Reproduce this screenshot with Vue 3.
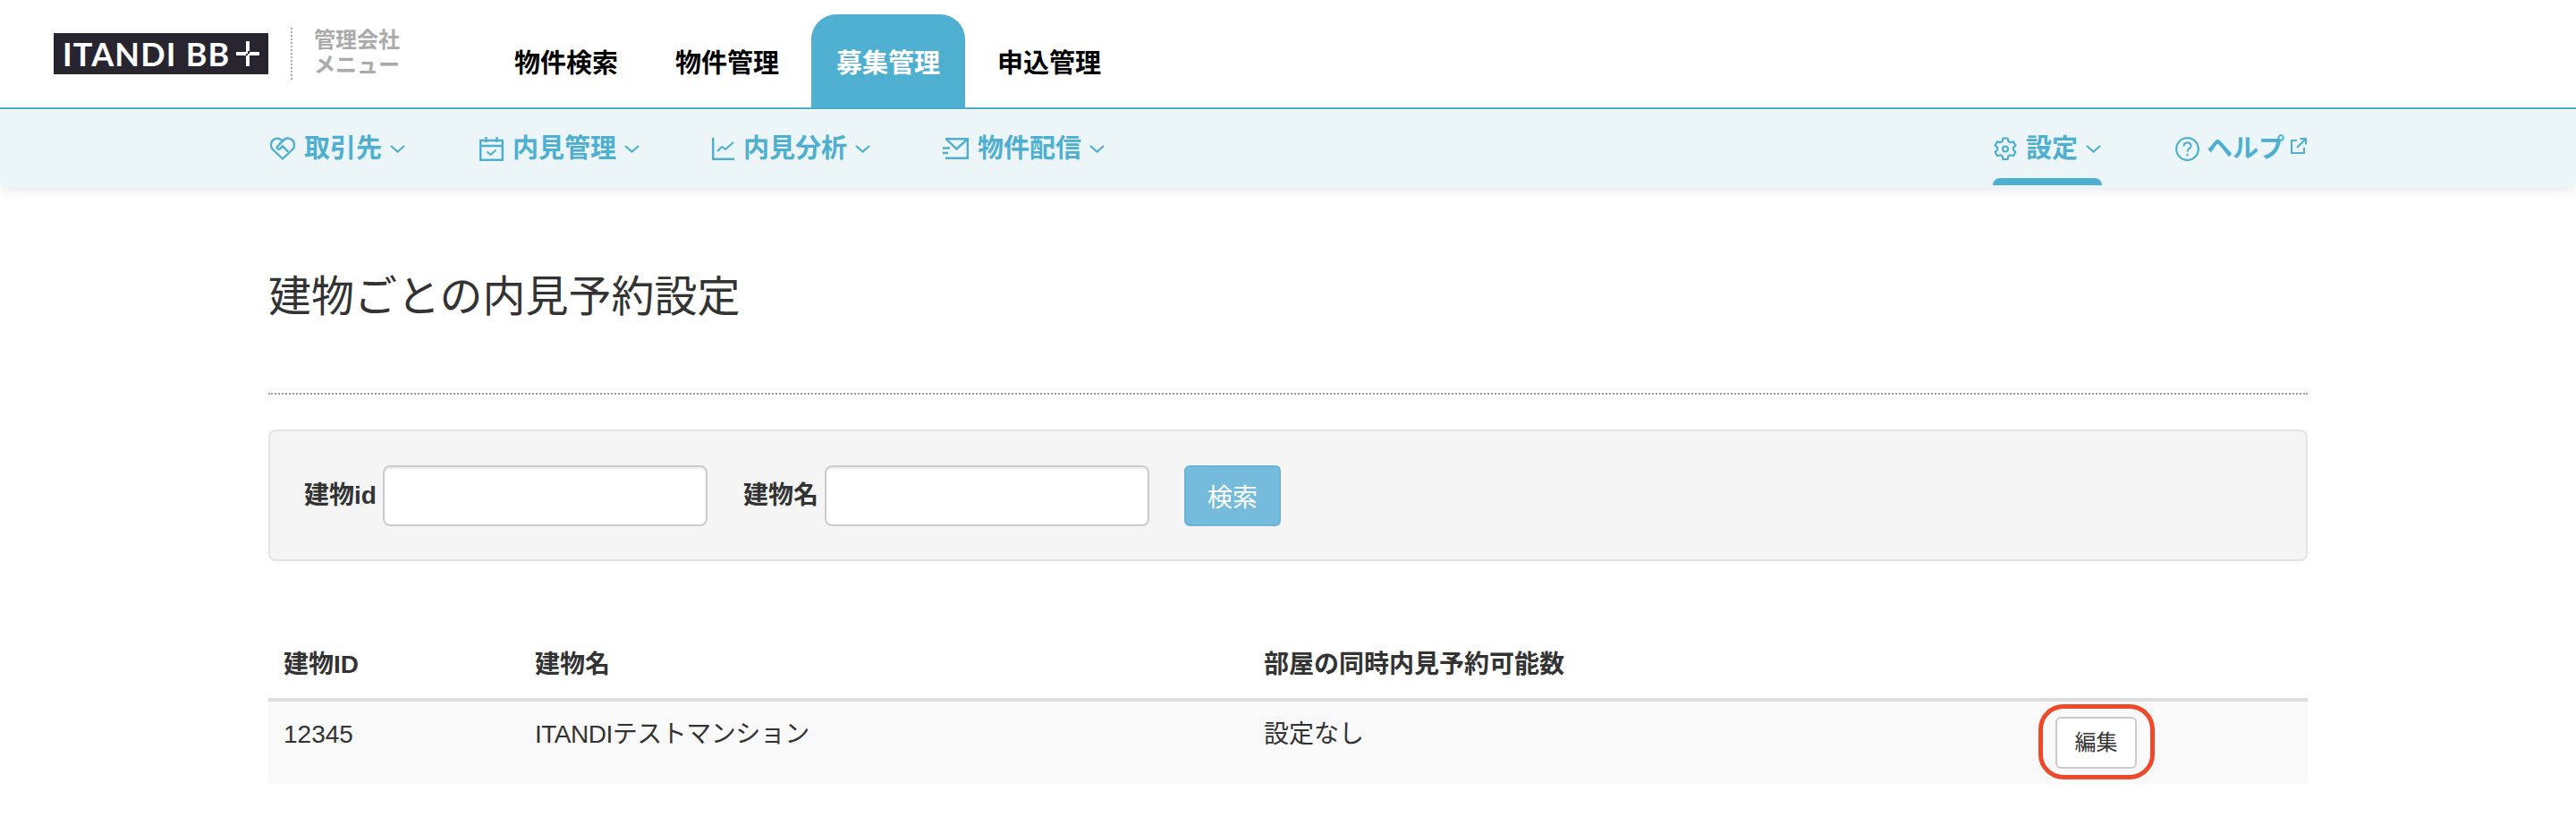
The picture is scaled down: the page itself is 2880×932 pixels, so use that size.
<script setup>
const topTabs = [
  { label: '物件検索', active: false },
  { label: '物件管理', active: false },
  { label: '募集管理', active: true },
  { label: '申込管理', active: false }
]
</script>

<template>
  <div class="page">
    <header class="top">
      <div class="logo">
        <span class="logo-text">ITANDI BB</span>
        <svg class="logo-plus" width="26" height="28" viewBox="0 0 26 28" fill="#fff">
          <rect x="0" y="12" width="11" height="4" />
          <rect x="15" y="12" width="11" height="4" />
          <rect x="11" y="0" width="4" height="11" />
          <rect x="11" y="16" width="4" height="12" />
          <rect x="11" y="11" width="2" height="3" />
          <rect x="13" y="14" width="2" height="2" />
        </svg>
      </div>
      <div class="menu-label">管理会社<br />メニュー</div>
      <nav class="tabs">
        <a v-for="t in topTabs" :key="t.label" class="tab" :class="{ active: t.active }">{{ t.label }}</a>
      </nav>
    </header>

    <div class="subnav">
      <div class="group left">
        <a class="item first">
          <svg width="28" height="26" viewBox="0 0 28 26" fill="none" stroke="#4fafd0" stroke-width="2.400" stroke-linejoin="round" stroke-linecap="round">
            <path d="M14 24.500 2.500 13.500C-.5 9.500 1 3 6.500 1.800 9.500 1.200 12 2.200 14 4.700 16 2.200 19 1.200 21.500 1.800 27 3 28.500 9.500 25.500 13.500Z" />
            <path d="M14 4.700 8 10.800C7 13.300 9.500 14.300 11 13.300L14 10.300 19.500 15.800" />
          </svg>
          <span class="txt">取引先</span>
          <svg class="chev" width="17" height="9" viewBox="0 0 17 9" fill="none" stroke="#4fafd0" stroke-width="2.200"><path d="M1 1l7.500 6.500L16 1" /></svg>
        </a>
        <a class="item">
          <svg width="27" height="27" viewBox="0 0 27 27" fill="none" stroke="#4fafd0" stroke-width="2.400">
            <path d="M1.200 4h24.600v21.800H1.200zM1.200 10h24.600M7.500 0v6M19.500 0v6" />
            <path d="M8.500 16.500l4 3.500 6-5.500" stroke-width="2" />
          </svg>
          <span class="txt">内見管理</span>
          <svg class="chev" width="17" height="9" viewBox="0 0 17 9" fill="none" stroke="#4fafd0" stroke-width="2.200"><path d="M1 1l7.500 6.500L16 1" /></svg>
        </a>
        <a class="item">
          <svg width="25" height="25" viewBox="0 0 25 25" fill="none" stroke="#4fafd0" stroke-width="2.400">
            <path d="M1.200 0v23.800H25" />
            <path d="M6 15l5-5 4 3 9-8" stroke-width="2" />
          </svg>
          <span class="txt">内見分析</span>
          <svg class="chev" width="17" height="9" viewBox="0 0 17 9" fill="none" stroke="#4fafd0" stroke-width="2.200"><path d="M1 1l7.500 6.500L16 1" /></svg>
        </a>
        <a class="item">
          <svg width="29" height="24" viewBox="0 0 29 24" fill="none" stroke="#4fafd0" stroke-width="2.400">
            <path d="M3 1.200h24.800v21.600H3M4 1.500l11.500 11 12-11" />
            <path d="M0 11.500h8M0 17h6" />
          </svg>
          <span class="txt">物件配信</span>
          <svg class="chev" width="17" height="9" viewBox="0 0 17 9" fill="none" stroke="#4fafd0" stroke-width="2.200"><path d="M1 1l7.500 6.500L16 1" /></svg>
        </a>
      </div>
      <div class="group right">
        <a class="item current">
          <svg width="26" height="27" viewBox="0 0 26 27" fill="none" stroke="#4fafd0" stroke-width="2.200" stroke-linejoin="round">
            <path d="M10.500 1.500h5l.8 3.400 2.300 1.300 3.300-1 2.500 4.300-2.500 2.400v2.600l2.500 2.400-2.500 4.300-3.300-1-2.300 1.300-.8 3.500h-5l-.8-3.500-2.300-1.300-3.300 1-2.500-4.300 2.500-2.400v-2.600L1.600 9.500l2.500-4.300 3.300 1 2.300-1.300z" />
            <circle cx="13" cy="13.500" r="3" />
          </svg>
          <span class="txt">設定</span>
          <svg class="chev" width="17" height="9" viewBox="0 0 17 9" fill="none" stroke="#4fafd0" stroke-width="2.200"><path d="M1 1l7.500 6.500L16 1" /></svg>
        </a>
        <a class="item help">
          <svg width="27" height="27" viewBox="0 0 27 27" fill="none" stroke="#4fafd0" stroke-width="2.200">
            <circle cx="13.500" cy="13.500" r="12.300" />
            <path d="M9.500 10.500c0-5.500 8-5.500 8-.5 0 3-4 3-4 6.500" />
            <circle cx="13.500" cy="20" r="1.300" fill="#4fafd0" stroke="none" />
          </svg>
          <span class="txt">ヘルプ</span>
          <svg class="ext" width="18" height="18" viewBox="0 0 18 18" fill="none" stroke="#4fafd0" stroke-width="2">
            <path d="M7 3H1v14h14v-6M7 11 17 1M10.500 1H17v6.500" />
          </svg>
        </a>
      </div>
    </div>

    <main class="main">
      <h1 class="title">建物ごとの内見予約設定</h1>
      <hr class="rule" />

      <form class="search" @submit.prevent>
        <label class="label">建物id</label>
        <input class="input" type="text" />
        <label class="label second">建物名</label>
        <input class="input" type="text" />
        <button class="search-btn" type="button">検索</button>
      </form>

      <table class="table">
        <colgroup>
          <col class="c1" /><col class="c2" /><col class="c3" /><col class="c4" />
        </colgroup>
        <thead>
          <tr>
            <th>建物ID</th>
            <th>建物名</th>
            <th>部屋の同時内見予約可能数</th>
            <th></th>
          </tr>
        </thead>
        <tbody>
          <tr>
            <td>12345</td>
            <td class="name">ITANDIテストマンション</td>
            <td>設定なし</td>
            <td>
              <span class="edit-wrap">
                <button class="edit" type="button">編集</button>
                <span class="ring"></span>
              </span>
            </td>
          </tr>
        </tbody>
      </table>
    </main>
  </div>
</template>

<style>
html, body { margin: 0; background: #fff; }
</style>

<style scoped>
.page {
  width: 2880px;
  height: 932px;
  overflow: hidden;
  font-family: "Liberation Sans", "Noto Sans CJK JP", sans-serif;
  color: #333;
  font-size: 28px;
}
.top {
  height: 120px;
  display: flex;
  align-items: center;
  border-bottom: 2px solid #4fafd0;
  background: #fff;
}
.logo {
  margin-left: 60px;
  width: 240px;
  height: 46px;
  box-sizing: border-box;
  padding-left: 10px;
  background: #282530;
  display: flex;
  align-items: center;
}
.logo-text {
  font-family: Lato, sans-serif;
  font-weight: 700;
  font-size: 36px;
  line-height: 46px;
  letter-spacing: 1.2px;
  color: #fff;
  white-space: nowrap;
}
.logo-plus { margin-left: 6px; flex: none; }
.menu-label {
  margin-left: 25px;
  padding-left: 24px;
  height: 58px;
  border-left: 2px dotted #aaa;
  font-size: 24px;
  font-weight: 700;
  line-height: 28px;
  color: #aaa;
  white-space: nowrap;
}
.tabs {
  margin-left: 100px;
  height: 104px;
  align-self: flex-end;
  display: flex;
  gap: 8px;
}
.tab {
  width: 172px;
  display: flex;
  align-items: center;
  justify-content: center;
  border-radius: 28px 28px 0 0;
  font-size: 29px;
  font-weight: 700;
  color: #000;
}
.tab.active { background: #4fafd0; color: #fff; }
.subnav {
  height: 88px;
  box-sizing: border-box;
  padding: 0 301px 0 302px;
  background: #ecf5f8;
  border-radius: 0 0 8px 8px;
  box-shadow: 0 4px 12px rgba(0, 0, 0, 0.08);
  display: flex;
  justify-content: space-between;
}
.group { display: flex; }
.group.left { gap: 81px; }
.group.right { gap: 83px; }
.item {
  position: relative;
  display: flex;
  align-items: center;
  color: #4fafd0;
  font-weight: 700;
  font-size: 29px;
  white-space: nowrap;
}
.item.first { margin-right: 2px; }
.txt { margin-left: 10px; line-height: 40px; }
.chev { margin-left: 9px; }
.help .txt { margin-left: 8px; }
.ext { margin-left: 7px; margin-top: -6px; }
.current::after {
  content: "";
  position: absolute;
  left: -1px;
  right: -1px;
  bottom: 3px;
  height: 8px;
  background: #4fafd0;
  border-radius: 8px 8px 0 0;
}
.main { padding: 0 300px; }
.title {
  margin: 95px 0 81px;
  font-size: 48px;
  line-height: 53px;
  font-weight: 400;
  color: #333;
}
.rule {
  margin: 0 0 39px;
  border: 0;
  border-top: 2px dotted #999;
}
.search {
  margin: 0;
  box-sizing: border-box;
  height: 147px;
  padding: 38px;
  background: #f5f5f5;
  border: 2px solid #e3e3e3;
  border-radius: 8px;
  display: flex;
  align-items: center;
}
.label { font-weight: 700; margin-right: 7px; line-height: 40px; }
.label.second { margin-left: 40px; }
.input {
  box-sizing: border-box;
  width: 363px;
  height: 68px;
  background: #fff;
  border: 2px solid #ccc;
  border-radius: 8px;
  box-shadow: inset 0 2px 2px rgba(0, 0, 0, 0.075);
}
.search-btn {
  margin-left: 39px;
  box-sizing: border-box;
  width: 108px;
  height: 68px;
  background: #74bbdc;
  border: 2px solid #6cb4d6;
  border-radius: 6px;
  color: #fff;
  font: inherit;
}
.table {
  margin-top: 79px;
  width: 2280px;
  border-collapse: collapse;
  table-layout: fixed;
}
.c1 { width: 281px; }
.c2 { width: 815px; }
.c3 { width: 885px; }
.c4 { width: 299px; }
th, td {
  padding: 17px;
  text-align: left;
  vertical-align: top;
  line-height: 40px;
}
th { font-weight: 700; border-bottom: 4px solid #ddd; }
tbody tr { background: #f9f9f9; }
.name { letter-spacing: -0.5px; }
.edit-wrap { position: relative; display: inline-block; vertical-align: top; }
.edit {
  display: block;
  box-sizing: border-box;
  width: 91px;
  height: 58px;
  background: #fff;
  border: 2px solid #ccc;
  border-radius: 6px;
  color: #333;
  font: inherit;
  font-size: 24px;
}
.ring {
  position: absolute;
  left: -19px;
  top: -14px;
  width: 130px;
  height: 84px;
  box-sizing: border-box;
  border: 5px solid #ee4a2a;
  border-radius: 28px;
}
</style>
